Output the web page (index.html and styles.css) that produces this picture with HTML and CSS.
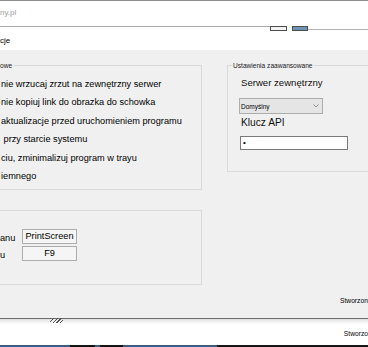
FILE: index.html
```html
<!DOCTYPE html>
<html lang="pl">
<head>
  <meta charset="UTF-8" />
  <meta name="viewport" content="width=device-width, initial-scale=1.0"/>
  <title>Opcje</title>
  <link rel="stylesheet" href="styles.css">
</head>
<body>
  <div class="host-window">ny.pl</div>
  <div class="host-toolbar">
    <span class="rule rule-left"></span>
    <span class="tool-icon"></span>
    <span class="tool-icon tool-icon-blue"></span>
    <span class="rule rule-right"></span>
  </div>

  <div class="dialog-title">cje</div>

  <div class="dialog-body">
    <div class="columns">
      <div class="col-left">
        <fieldset class="group group-basic">
          <legend>owe</legend>
          <label class="opt">nie wrzucaj zrzut na zewnętrzny serwer</label>
          <label class="opt">nie kopiuj link do obrazka do schowka</label>
          <label class="opt">aktualizacje przed uruchomieniem programu</label>
          <label class="opt">&nbsp;przy starcie systemu</label>
          <label class="opt">ciu, zminimalizuj program w trayu</label>
          <label class="opt">iemnego</label>
        </fieldset>

        <div class="group group-keys">
          <div class="key-row">
            <span class="key-label">anu</span>
            <span class="key-box">PrintScreen</span>
          </div>
          <div class="key-row">
            <span class="key-label">u</span>
            <span class="key-box">F9</span>
          </div>
        </div>
      </div>

      <fieldset class="group group-advanced">
        <legend>Ustawienia zaawansowane</legend>
        <div class="field-label">Serwer zewnętrzny</div>
        <div class="select">
          <span>Domyślny</span>
          <svg width="6" height="4" viewBox="0 0 6 4"><path d="M0.5 0.5 L3 3 L5.5 0.5" fill="none" stroke="#7a7a7a" stroke-width="0.8"/></svg>
        </div>
        <div class="field-label field-label-big">Klucz API</div>
        <div class="input">•</div>
      </fieldset>
    </div>

    <div class="credits">Stworzon</div>
  </div>

  <div class="status">
    <span class="grip"></span>
    <span class="status-text">Stworzo</span>
  </div>
  <div class="taskbar"></div>
</body>
</html>
```

FILE: styles.css
```css
* {
  margin: 0;
  padding: 0;
  box-sizing: border-box;
}

body {
  width: 368px;
  height: 347px;
  overflow: hidden;
  background: #fff;
  color: #000;
  font-family: "Liberation Sans", Arial, sans-serif;
}

/* window behind the dialog */
.host-window {
  height: 26px;
  border-top: 1px solid #8c8c8c;
  font-size: 8px;
  line-height: 24px;
  color: #9c9c9c;
  white-space: nowrap;
}

.host-toolbar {
  display: flex;
  height: 6px;
}

.rule-left {
  width: 270px;
  border-top: 1px solid #a9a9a9;
}

.tool-icon {
  width: 17px;
  height: 5px;
  border: 1px solid #4c4c4c;
  background: #f4f4f4;
}

.tool-icon-blue {
  width: 16px;
  margin-left: 5px;
  background: #6e93b3;
}

.rule-right {
  flex: 1;
  margin-top: 3px;
  border-top: 1px solid #b4b4b4;
}

/* dialog */
.dialog-title {
  height: 18px;
  font-size: 8px;
  line-height: 18px;
  white-space: nowrap;
}

.dialog-body {
  height: 268px;
  background: #f0f0f0;
  display: flex;
  flex-direction: column;
  overflow: hidden;
}

.columns {
  display: flex;
  align-items: flex-start;
  margin-top: 11px;
}

.col-left {
  width: 203px;
  margin-left: -1px;
  flex-shrink: 0;
}

.group {
  border: 1px solid #d9d9d9;
}

.group legend {
  font-size: 6.6px;
  line-height: 9px;
  color: #1a1a1a;
  white-space: nowrap;
}

.group-basic {
  padding: 5px 0 4px 0;
}

.group-basic legend {
  padding: 0 2px 0 0;
}

.opt {
  display: block;
  font-size: 9.2px;
  line-height: 18.4px;
  padding-left: 1px;
  white-space: nowrap;
}

.group-keys {
  margin-top: 20px;
  height: 75px;
  border-left: none;
  padding-top: 18px;
  display: flex;
  flex-direction: column;
  gap: 2px;
}

.key-row {
  display: grid;
  grid-template-columns: 23px 55px;
  align-items: center;
}

.key-label {
  padding-left: 1px;
  padding-top: 2px;
  font-size: 9.2px;
}

.key-box {
  height: 15px;
  border: 1px solid #adadad;
  background: #f5f5f5;
  font-size: 9.2px;
  line-height: 13px;
  text-align: center;
}

.group-advanced {
  margin-left: 25px;
  width: 170px;
  flex-shrink: 0;
  padding: 0 0 21px 4px;
}

.group-advanced legend {
  padding: 0 1px;
}

.field-label {
  margin: 6px 0 0 9px;
  font-size: 9.6px;
  line-height: 13px;
  color: #111;
  white-space: nowrap;
}

.field-label-big {
  margin-top: 3px;
  font-size: 10.2px;
  line-height: 12px;
}

.select {
  margin: 9px 0 0 7px;
  width: 84px;
  height: 16px;
  border: 1px solid #adadad;
  background: #e5e5e5;
  display: flex;
  align-items: center;
  justify-content: space-between;
  padding: 0 3px 0 1px;
  font-size: 6.5px;
}

.input {
  margin: 7px 0 0 8px;
  width: 108px;
  height: 14px;
  border: 1px solid #7a7a7a;
  background: #fff;
  font-size: 8px;
  line-height: 12px;
  padding-left: 2px;
}

.credits {
  margin-top: auto;
  margin-bottom: 12px;
  padding-left: 340px;
  font-size: 6.7px;
  line-height: 10px;
  white-space: nowrap;
}

/* status strip of the window behind */
.status {
  height: 27px;
  border-top: 1px solid #6e6e6e;
  background: linear-gradient(#dedede, #f3f3f3 3px, #fff 5px);
  display: flex;
  align-items: flex-start;
  white-space: nowrap;
}

.grip {
  width: 13px;
  height: 5px;
  margin: -1px 0 0 50px;
  background: repeating-linear-gradient(135deg, #555 0 1px, transparent 1px 2.5px);
}

.status-text {
  margin: 10px 0 0 281px;
  font-size: 6.7px;
  line-height: 10px;
}

.taskbar {
  height: 2px;
  background: linear-gradient(90deg,
    #3a5b82 0 70px, #141414 70px 95px, #3a5b82 95px 100px,
    #141414 100px 123px, #3a5b82 123px 217px, #161616 217px);
}
```
